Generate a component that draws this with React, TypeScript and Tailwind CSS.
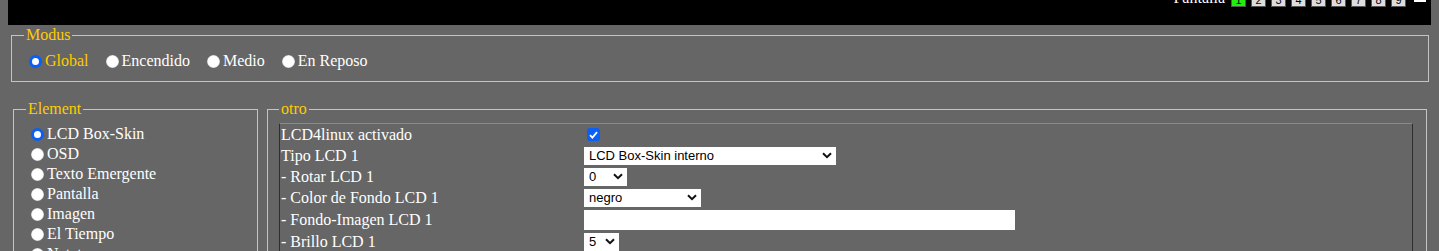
import React from 'react';

const modes = ["Global", "Encendido", "Medio", "En Reposo"];
const elements = ["LCD Box-Skin", "OSD", "Texto Emergente", "Pantalla", "Imagen", "El Tiempo", "Netatmo", "Luna", "Reloj"];

const Radio = ({ checked }: { checked?: boolean }) =>
  checked ? (
    <span className="inline-block w-[13px] h-[13px] rounded-full border-[3px] border-[#0a5ff5] bg-white ml-[5px] mr-[3px] shrink-0" />
  ) : (
    <span className="inline-block w-[13px] h-[13px] rounded-full bg-white shadow-[inset_0_0_1px_rgba(0,0,0,0.6)] ml-[5px] mr-[3px] shrink-0" />
  );

const Chevron = () => (
  <svg width="10" height="7" viewBox="0 0 10 7" className="shrink-0">
    <path d="M1 1.2 L5 5.2 L9 1.2" fill="none" stroke="#111" strokeWidth="2" />
  </svg>
);

const Select = ({ value, w }: { value: string; w: string }) => (
  <div className={`${w} h-[18px] bg-white flex items-center justify-between pl-[5px] pr-[4px] text-[13px] text-black font-['Liberation_Sans',Arial,sans-serif] leading-none`}>
    <span>{value}</span>
    <Chevron />
  </div>
);

const rows: { label: string; h: string; kind: 'check' | 'select' | 'input'; value?: string; w?: string }[] = [
  { label: "LCD4linux activado", h: "h-[21px]", kind: 'check' },
  { label: "Tipo LCD 1", h: "h-[21px]", kind: 'select', value: "LCD Box-Skin interno", w: "w-[252px]" },
  { label: "- Rotar LCD 1", h: "h-[21px]", kind: 'select', value: "0", w: "w-[43px]" },
  { label: "- Color de Fondo LCD 1", h: "h-[21px]", kind: 'select', value: "negro", w: "w-[117px]" },
  { label: "- Fondo-Imagen LCD 1", h: "h-[23px]", kind: 'input' },
  { label: "- Brillo LCD 1", h: "h-[21px]", kind: 'select', value: "5", w: "w-[35px]" },
  { label: "- Brillo LCD 1 en reposo", h: "h-[21px]", kind: 'select', value: "0", w: "w-[35px]" },
];

export default function App() {
  return (
    <div className="h-[251px] overflow-hidden bg-[#666666] px-2 text-white text-[16px] leading-[20px] font-['Liberation_Serif','Times_New_Roman',serif]">
      <div className="h-[25px] bg-black overflow-hidden">
        <div className="flex justify-end items-end gap-[5px] pr-[5px] mt-[-12px] h-[19px]">
          <span className="leading-[18px] mr-[1px]">Pantalla</span>
          {[1, 2, 3, 4, 5, 6, 7, 8, 9].map((n) => (
            <span
              key={n}
              className={`w-[15px] h-[19px] border border-[#555] flex items-end justify-center text-[11px] leading-[12px] text-black font-['Liberation_Sans',Arial,sans-serif] ${n === 1 ? 'bg-[#22ee11]' : 'bg-[#dddddd]'}`}
            >
              {n}
            </span>
          ))}
          <span className="w-[12px] h-[14px] bg-white mb-[5px] ml-[3px]" />
        </div>
      </div>

      <fieldset className="mt-[1px] ml-[3px] mr-[2px] border border-[#c4c4c4] px-[12px] pt-[7px] pb-[10px]">
        <legend className="px-[2px] text-[#ffcc00] leading-[18px]">Modus</legend>
        <div className="flex items-center h-[20px]">
          {modes.map((m, i) => (
            <label key={m} className={`flex items-center mr-[12px] ${i === 0 ? 'text-[#ffcc00]' : ''}`}>
              <Radio checked={i === 0} />
              {m}
            </label>
          ))}
        </div>
      </fieldset>

      <div className="flex gap-[9px] mt-[18px] ml-[5px] mr-[4px]">
        <fieldset className="w-[245px] shrink-0 border border-[#c4c4c4] pl-[12px] pt-[6px]">
          <legend className="px-[2px] text-[#ffcc00] leading-[18px]">Element</legend>
          {elements.map((e, i) => (
            <label key={e} className="flex items-center h-[20px]">
              <Radio checked={i === 0} />
              {e}
            </label>
          ))}
        </fieldset>

        <fieldset className="flex-1 border border-[#c4c4c4] pl-[11px] pr-[13px] pt-[5px]">
          <legend className="px-[2px] text-[#ffcc00] leading-[18px]">otro</legend>
          <div className="border-t border-t-[#8a8a8a] border-l border-l-[#2e2e2e] border-r border-r-[#2e2e2e] pl-[1px]">
            {rows.map((r) => (
              <div key={r.label} className={`flex items-center ${r.h}`}>
                <span className="w-[303px] shrink-0">{r.label}</span>
                {r.kind === 'check' && (
                  <span className="ml-[3px] w-[13px] h-[13px] rounded-[3px] bg-[#0a5ff5] flex items-center justify-center">
                    <svg width="9" height="8" viewBox="0 0 9 8">
                      <path d="M1 4.2 L3.4 6.6 L8 1.2" fill="none" stroke="#fff" strokeWidth="1.8" />
                    </svg>
                  </span>
                )}
                {r.kind === 'select' && <Select value={r.value!} w={r.w!} />}
                {r.kind === 'input' && <div className="w-[431px] h-[20px] bg-white" />}
              </div>
            ))}
          </div>
        </fieldset>
      </div>
    </div>
  );
}
